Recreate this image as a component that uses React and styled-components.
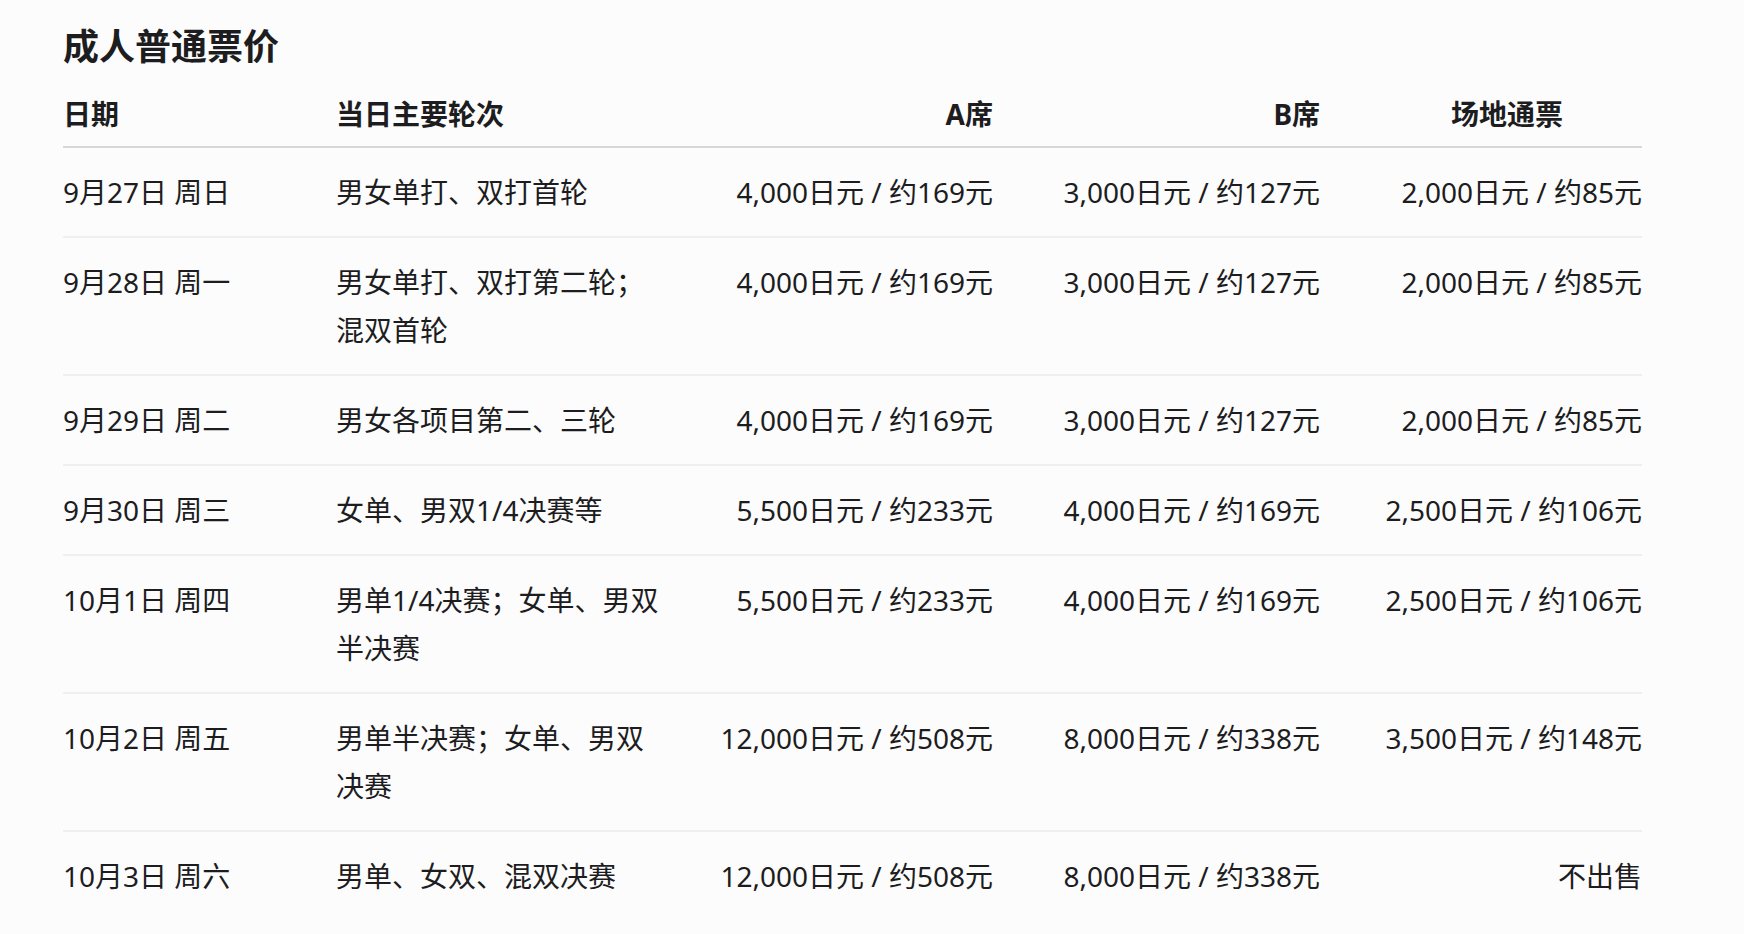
import React from "react";
import styled, { createGlobalStyle } from "styled-components";

const GlobalStyle = createGlobalStyle`
  html, body {
    margin: 0;
    padding: 0;
    background: #fcfcfc;
  }
  body {
    font-family: "Noto Sans", "Noto Sans CJK SC", sans-serif;
    color: #1d1d1f;
    -webkit-font-smoothing: antialiased;
  }
`;

const Section = styled.section`
  padding: 20px 102px 0 63px;
`;

const Title = styled.h2`
  margin: 0 0 16px;
  font-size: 36px;
  line-height: 54px;
  font-weight: 700;
  color: #1d1d1f;
`;

const Table = styled.div`
  display: flex;
  flex-direction: column;
  font-size: 28px;
  line-height: 48px;
`;

const columns = "273px 357px 300px 327px 322px";

const HeadRow = styled.div`
  display: grid;
  grid-template-columns: ${columns};
  padding-bottom: 8px;
  border-bottom: 2px solid #d8d8d8;
`;

const Row = styled.div`
  display: grid;
  grid-template-columns: ${columns};
  padding: 20px 0 20px;
  border-bottom: 2px solid #efefef;
  &:last-child {
    border-bottom-color: transparent;
  }
`;

const HeadCell = styled.div`
  font-weight: 700;
  text-align: ${(p) => p.$align || "left"};
  padding-left: ${(p) => p.$padLeft || 0}px;
  white-space: nowrap;
`;

const Cell = styled.div`
  text-align: ${(p) => p.$align || "left"};
  padding-right: ${(p) => p.$padRight || 0}px;
  white-space: ${(p) => (p.$wrap ? "normal" : "nowrap")};
`;

const rows = [
  ["9月27日 周日", "男女单打、双打首轮", "4,000日元 / 约169元", "3,000日元 / 约127元", "2,000日元 / 约85元"],
  ["9月28日 周一", "男女单打、双打第二轮；混双首轮", "4,000日元 / 约169元", "3,000日元 / 约127元", "2,000日元 / 约85元"],
  ["9月29日 周二", "男女各项目第二、三轮", "4,000日元 / 约169元", "3,000日元 / 约127元", "2,000日元 / 约85元"],
  ["9月30日 周三", "女单、男双1/4决赛等", "5,500日元 / 约233元", "4,000日元 / 约169元", "2,500日元 / 约106元"],
  ["10月1日 周四", "男单1/4决赛；女单、男双半决赛", "5,500日元 / 约233元", "4,000日元 / 约169元", "2,500日元 / 约106元"],
  ["10月2日 周五", "男单半决赛；女单、男双决赛", "12,000日元 / 约508元", "8,000日元 / 约338元", "3,500日元 / 约148元"],
  ["10月3日 周六", "男单、女双、混双决赛", "12,000日元 / 约508元", "8,000日元 / 约338元", "不出售"],
];

export default function App() {
  return (
    <>
      <GlobalStyle />
      <Section>
        <Title>成人普通票价</Title>
        <Table>
          <HeadRow>
            <HeadCell>日期</HeadCell>
            <HeadCell>当日主要轮次</HeadCell>
            <HeadCell $align="right">A席</HeadCell>
            <HeadCell $align="right">B席</HeadCell>
            <HeadCell $align="center" $padLeft={52}>场地通票</HeadCell>
          </HeadRow>
          {rows.map((r) => (
            <Row key={r[0]}>
              <Cell>{r[0]}</Cell>
              <Cell $wrap $padRight={22}>{r[1]}</Cell>
              <Cell $align="right">{r[2]}</Cell>
              <Cell $align="right">{r[3]}</Cell>
              <Cell $align="right">{r[4]}</Cell>
            </Row>
          ))}
        </Table>
      </Section>
    </>
  );
}
